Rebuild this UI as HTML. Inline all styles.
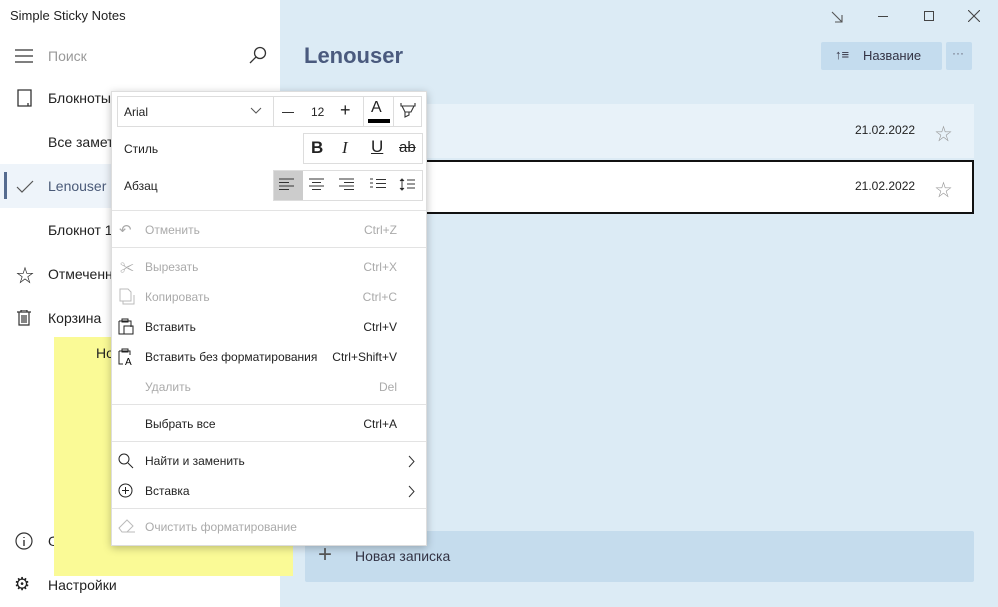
<!DOCTYPE html>
<html><head><meta charset="utf-8"><style>
*{margin:0;padding:0;box-sizing:border-box}
body{width:998px;height:607px;overflow:hidden;font-family:"Segoe UI","Liberation Sans","Noto Sans CJK SC",sans-serif;font-size:13px;color:#222;position:relative;background:#fff}
.a{position:absolute}
.side{left:0;top:0;width:280px;height:607px;background:#fff}
.main{left:280px;top:0;width:718px;height:607px;background:#dcebf5}
.t{position:absolute;white-space:nowrap}
.menu{left:111px;top:91px;width:316px;height:455px;background:#fff;border:1px solid #ddd;box-shadow:0 2px 8px rgba(0,0,0,.25)}
.sep{position:absolute;left:0;width:314px;height:1px;background:#e3e3e3}
.g{color:#aaa}
.box{position:absolute;border:1px solid #ddd;height:31px}
.mi{position:absolute;left:33px;font-size:12px}
.sc{position:absolute;right:29px;font-size:12px;text-align:right}
svg{position:absolute}
</style></head><body>
<div class="a side">
 <div class="t" style="left:10px;top:8px;font-size:13px">Simple Sticky Notes</div>
 <svg style="left:15px;top:49px" width="18" height="14"><path d="M0 1h18M0 7h18M0 13h18" stroke="#333" stroke-width="1.3"/></svg>
 <div class="t" style="left:48px;top:48px;color:#999;font-size:14px">Поиск</div>
 <svg style="left:248px;top:46px" width="20" height="20"><circle cx="12" cy="7" r="5.5" fill="none" stroke="#333" stroke-width="1.3"/><path d="M8 11L2 17" stroke="#333" stroke-width="1.3"/></svg>
 <svg style="left:17px;top:89px" width="16" height="18"><path d="M1 1h13v16H1zM11 14v3" fill="none" stroke="#333" stroke-width="1.3"/></svg>
 <div class="t" style="left:48px;top:90px;font-size:14px">Блокноты</div>
 <div class="t" style="left:48px;top:134px;font-size:14px">Все замет</div>
 <div class="a" style="left:0;top:164px;width:280px;height:44px;background:#eef4fa"></div>
 <div class="a" style="left:4px;top:172px;width:3px;height:27px;background:#556b8f"></div>
 <svg style="left:16px;top:180px" width="18" height="14"><path d="M1 7l5 5L17 1" fill="none" stroke="#555" stroke-width="1.2"/></svg>
 <div class="t" style="left:48px;top:178px;font-size:14px;color:#4a5a78">Lenouser</div>
 <div class="t" style="left:48px;top:222px;font-size:14px">Блокнот 1</div>
 <div class="t" style="left:16px;top:262px;font-size:18px">☆</div>
 <div class="t" style="left:48px;top:266px;font-size:14px">Отмеченн</div>
 <svg style="left:17px;top:310px" width="14" height="16"><path d="M0 2h14M4 2V0h6v2M2 2v13h10V2M5 5v8M7 5v8M9 5v8" fill="none" stroke="#333" stroke-width="1.2"/></svg>
 <div class="t" style="left:48px;top:310px;font-size:14px">Корзина</div>
 <svg style="left:15px;top:532px" width="18" height="18"><circle cx="9" cy="9" r="8" fill="none" stroke="#333" stroke-width="1.2"/><path d="M9 8v6M9 5v1" stroke="#333" stroke-width="1.4"/></svg>
 <div class="t" style="left:48px;top:533px;font-size:14px">О</div>
 <div class="t" style="left:14px;top:574px;font-size:18px">⚙</div>
 <div class="t" style="left:48px;top:577px;font-size:14px">Настройки</div>
</div>
<div class="a main">
 <svg style="left:550px;top:10px" width="14" height="14"><path d="M2 2l10 10M5 12h7V5" fill="none" stroke="#555" stroke-width="1.1"/></svg>
 <div class="a" style="left:598px;top:16px;width:10px;height:1px;background:#444"></div>
 <div class="a" style="left:644px;top:11px;width:10px;height:10px;border:1px solid #444"></div>
 <svg style="left:688px;top:10px" width="12" height="12"><path d="M0 0l12 12M12 0L0 12" stroke="#444" stroke-width="1.1"/></svg>
 <div class="t" style="left:24px;top:43px;font-size:22px;font-weight:600;color:#4a5a7e">Lenouser</div>
 <div class="a" style="left:541px;top:42px;width:121px;height:28px;background:#c4dcee;border-radius:2px"></div>
 <div class="t" style="left:555px;top:47px;font-size:13px;color:#334">↑≡</div>
 <div class="t" style="left:583px;top:48px;font-size:13px;color:#334">Название</div>
 <div class="a" style="left:666px;top:42px;width:26px;height:28px;background:#c4dcee;border-radius:2px"></div>
 <div class="t" style="left:672px;top:46px;font-size:12px;color:#667">···</div>
 <div class="a" style="left:25px;top:104px;width:669px;height:54px;background:#e8f2f9"></div>
 <div class="t" style="left:575px;top:123px;font-size:12px">21.02.2022</div>
 <div class="t" style="left:655px;top:120px;font-size:17px;color:#999">☆</div>
 <div class="a" style="left:25px;top:160px;width:669px;height:54px;background:#fff;border:2px solid #111"></div>
 <div class="t" style="left:575px;top:179px;font-size:12px">21.02.2022</div>
 <div class="t" style="left:655px;top:176px;font-size:17px;color:#999">☆</div>
 <div class="a" style="left:25px;top:531px;width:669px;height:51px;background:#c5dced;border-radius:2px"></div>
 <div class="t" style="left:38px;top:541px;font-size:24px;font-weight:300;color:#555">+</div>
 <div class="t" style="left:75px;top:548px;font-size:14px;color:#334">Новая записка</div>
</div>
<div class="a" style="left:54px;top:337px;width:239px;height:239px;background:#fafa96"></div>
<div class="t" style="left:96px;top:345px;font-size:14px">Но</div>
<div class="a menu">
 <div class="box" style="left:5px;top:4px;width:157px"></div>
 <div class="t" style="left:12px;top:13px;font-size:12px">Arial</div>
 <svg style="left:138px;top:15px" width="12" height="8"><path d="M1 1l5 5 5-5" fill="none" stroke="#555"/></svg>
 <div class="box" style="left:161px;top:4px;width:91px"></div>
 <div class="a" style="left:170px;top:20px;width:12px;height:1px;background:#333"></div>
 <div class="t" style="left:199px;top:13px;font-size:12px">12</div>
 <div class="t" style="left:228px;top:8px;font-size:18px;font-weight:300">+</div>
 <div class="box" style="left:251px;top:4px;width:31px"></div>
 <div class="t" style="left:259px;top:7px;font-size:16px">A</div>
 <div class="a" style="left:256px;top:27px;width:22px;height:4px;background:#000"></div>
 <div class="box" style="left:281px;top:4px;width:29px"></div>
 <svg style="left:288px;top:10px" width="16" height="18"><path d="M1 1v3h14V1M2 4l3 6h6l3-6M5 10v5l4-2v-3" fill="none" stroke="#333" stroke-width="1.1"/></svg>
 <div class="t" style="left:12px;top:50px;font-size:12px">Стиль</div>
 <div class="box" style="left:191px;top:41px;width:120px"></div>
 <div class="t" style="left:199px;top:46px;font-size:17px;font-weight:bold">B</div>
 <div class="t" style="left:230px;top:46px;font-size:17px;font-style:italic;font-family:'Liberation Serif',serif">I</div>
 <div class="t" style="left:259px;top:45px;font-size:17px;text-decoration:underline">U</div>
 <div class="t" style="left:287px;top:47px;font-size:15px;text-decoration:line-through">ab</div>
 <div class="t" style="left:12px;top:87px;font-size:12px">Абзац</div>
 <div class="box" style="left:161px;top:78px;width:150px"></div>
 <div class="a" style="left:162px;top:79px;width:29px;height:29px;background:#ccc"></div>
 <svg style="left:166px;top:86px" width="140" height="14"><g stroke="#333" stroke-width="1"><path d="M1 1h15M1 4.5h10M1 8h15M1 11.5h10"/><path d="M31 1h15M34 4.5h9M31 8h15M34 11.5h9"/><path d="M61 1h15M66 4.5h10M61 8h15M66 11.5h10"/><path d="M92 1h3M92 5h3M92 9h3M98 1.5h10M98 5.5h10M98 9.5h10"/><path d="M124 1v11M122 3l2-2 2 2M122 10l2 2 2-2M129 2h8M129 6h8M129 10h8"/></g></svg>
 <div class="sep" style="top:118px"></div>
 <div class="t g" style="left:7px;top:129px;font-size:15px">↶</div>
 <div class="mi g" style="top:131px">Отменить</div><div class="sc g" style="top:131px">Ctrl+Z</div>
 <div class="sep" style="top:155px"></div>
 <div class="t g" style="left:8px;top:166px;font-size:14px">✂</div>
 <div class="mi g" style="top:168px">Вырезать</div><div class="sc g" style="top:168px">Ctrl+X</div>
 <svg style="left:7px;top:196px" width="16" height="17"><path d="M1 1h8l3 3v9H1zM4 13v3h11V7" fill="none" stroke="#bbb"/></svg>
 <div class="mi g" style="top:198px">Копировать</div><div class="sc g" style="top:198px">Ctrl+C</div>
 <svg style="left:6px;top:226px" width="16" height="17"><path d="M1 3h12v6M1 3v13h5M4 1h6v3H4zM6 8h9v8H6z" fill="none" stroke="#222"/></svg>
 <div class="mi" style="top:228px">Вставить</div><div class="sc" style="top:228px">Ctrl+V</div>
 <svg style="left:6px;top:256px" width="18" height="18"><path d="M1 3h11v4M1 3v13h4M4 1h6v3H4z" fill="none" stroke="#222"/><text x="7" y="17" font-size="10" font-family="Liberation Sans">A</text></svg>
 <div class="mi" style="top:258px">Вставить без форматирования</div><div class="sc" style="top:258px">Ctrl+Shift+V</div>
 <div class="mi g" style="top:288px">Удалить</div><div class="sc g" style="top:288px">Del</div>
 <div class="sep" style="top:312px"></div>
 <div class="mi" style="top:325px">Выбрать все</div><div class="sc" style="top:325px">Ctrl+A</div>
 <div class="sep" style="top:349px"></div>
 <svg style="left:6px;top:361px" width="16" height="16"><circle cx="6" cy="6" r="5" fill="none" stroke="#222"/><path d="M10 10l5 5" stroke="#222"/></svg>
 <div class="mi" style="top:362px">Найти и заменить</div>
 <svg style="left:296px;top:363px" width="8" height="13"><path d="M1 1l5 5.5L1 12" fill="none" stroke="#333"/></svg>
 <svg style="left:6px;top:391px" width="16" height="16"><circle cx="7.5" cy="7.5" r="6.5" fill="none" stroke="#222"/><path d="M7.5 4v7M4 7.5h7" stroke="#222"/></svg>
 <div class="mi" style="top:392px">Вставка</div>
 <svg style="left:296px;top:393px" width="8" height="13"><path d="M1 1l5 5.5L1 12" fill="none" stroke="#333"/></svg>
 <div class="sep" style="top:416px"></div>
 <svg style="left:6px;top:426px" width="18" height="16"><path d="M1 10l8-8 6 6-6 6H4zM5 14h12" fill="none" stroke="#bbb"/></svg>
 <div class="mi g" style="top:428px">Очистить форматирование</div>
</div>
</body></html>
